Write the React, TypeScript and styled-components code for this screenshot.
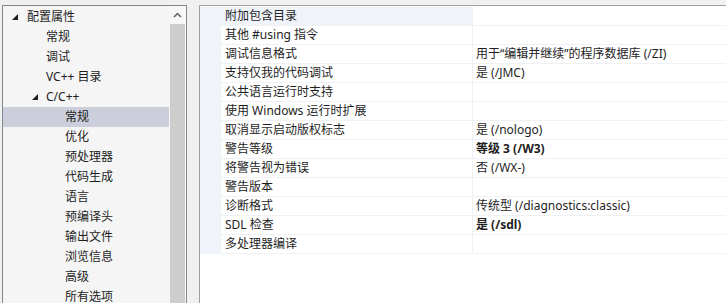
import React from "react";
import styled, { createGlobalStyle } from "styled-components";

const Global = createGlobalStyle`
  html, body { margin: 0; padding: 0; background: #f0f0f0; }
  body { font-family: "Noto Sans", "Noto Sans CJK SC", sans-serif; font-size: 12px; color: #1e1e1e; overflow: hidden; }
`;

const Page = styled.div`
  display: flex;
  align-items: flex-start;
  padding: 5px 0 0 2px;
  height: 303px;
  box-sizing: border-box;
  overflow: hidden;
`;

const TreePanel = styled.div`
  width: 185px;
  height: 320px;
  box-sizing: border-box;
  border: 1px solid #828790;
  background: #f5f5f5;
  display: flex;
  flex-shrink: 0;
`;

const TreeList = styled.div`
  flex: 1;
  padding-top: 1px;
  display: flex;
  flex-direction: column;
`;

const TreeRow = styled.div<{ $level: number; $selected?: boolean }>`
  height: 20px;
  display: flex;
  align-items: center;
  padding-left: ${(p) => 24 + p.$level * 19}px;
  background: ${(p) => (p.$selected ? "#cccedb" : "transparent")};
  position: relative;
  white-space: nowrap;
  line-height: 20px;
`;

const Expander = styled.svg`
  position: absolute;
  top: 7px;
`;

const ScrollBar = styled.div`
  width: 17px;
  background: #f7f7f7;
  display: flex;
  flex-direction: column;
  align-items: center;
`;

const ScrollArrow = styled.div`
  height: 18px;
  width: 100%;
  display: flex;
  align-items: center;
  justify-content: center;
`;

const Thumb = styled.div`
  width: 15px;
  flex: 1;
  background: #cdcdcd;
`;

const Gap = styled.div`
  width: 12px;
  flex-shrink: 0;
`;

const GridPanel = styled.div`
  flex: 1;
  height: 320px;
  border-left: 1px solid #a0a0a0;
  border-top: 1px solid #a0a0a0;
  background: #ffffff;
  padding-top: 1px;
  box-sizing: border-box;
`;

const Row = styled.div`
  display: grid;
  grid-template-columns: 21px 252px 1fr;
  height: 19px;
`;

const Margin = styled.div`
  background: #f0f4fa;
`;

const Cell = styled.div<{ $active?: boolean; $bold?: boolean }>`
  border-bottom: 1px solid #f0f1f5;
  background: ${(p) => (p.$active ? "#f0f4fa" : "#ffffff")};
  font-weight: ${(p) => (p.$bold ? 700 : 400)};
  padding-left: 4px;
  line-height: 18px;
  white-space: nowrap;
  overflow: hidden;
`;

const NameCell = styled(Cell)`
  border-right: 1px solid #f0f1f5;
`;

const ValueCell = styled(Cell)`
  padding-left: 3px;
`;

type TreeItem = { label: string; level: number; expanded?: boolean; selected?: boolean };

const tree: TreeItem[] = [
  { label: "配置属性", level: 0, expanded: true },
  { label: "常规", level: 1 },
  { label: "调试", level: 1 },
  { label: "VC++ 目录", level: 1 },
  { label: "C/C++", level: 1, expanded: true },
  { label: "常规", level: 2, selected: true },
  { label: "优化", level: 2 },
  { label: "预处理器", level: 2 },
  { label: "代码生成", level: 2 },
  { label: "语言", level: 2 },
  { label: "预编译头", level: 2 },
  { label: "输出文件", level: 2 },
  { label: "浏览信息", level: 2 },
  { label: "高级", level: 2 },
  { label: "所有选项", level: 2 },
];

type Prop = { name: string; value?: string; bold?: boolean };

const props: Prop[] = [
  { name: "附加包含目录" },
  { name: "其他 #using 指令" },
  { name: "调试信息格式", value: "用于“编辑并继续”的程序数据库 (/ZI)" },
  { name: "支持仅我的代码调试", value: "是 (/JMC)" },
  { name: "公共语言运行时支持" },
  { name: "使用 Windows 运行时扩展" },
  { name: "取消显示启动版权标志", value: "是 (/nologo)" },
  { name: "警告等级", value: "等级 3 (/W3)", bold: true },
  { name: "将警告视为错误", value: "否 (/WX-)" },
  { name: "警告版本" },
  { name: "诊断格式", value: "传统型 (/diagnostics:classic)" },
  { name: "SDL 检查", value: "是 (/sdl)", bold: true },
  { name: "多处理器编译" },
];

export default function App() {
  return (
    <>
      <Global />
      <Page>
        <TreePanel>
          <TreeList>
            {tree.map((t, i) => (
              <TreeRow key={i} $level={t.level} $selected={t.selected}>
                {t.expanded && (
                  <Expander
                    width="6"
                    height="6"
                    viewBox="0 0 6 6"
                    style={{ left: 9 + t.level * 20 }}
                  >
                    <polygon points="0,6 6,6 6,0" fill="#1e1e1e" />
                  </Expander>
                )}
                {t.label}
              </TreeRow>
            ))}
          </TreeList>
          <ScrollBar>
            <ScrollArrow>
              <svg width="9" height="6" viewBox="0 0 9 6">
                <polyline points="1,5 4.5,1.5 8,5" fill="none" stroke="#606060" strokeWidth="1.5" />
              </svg>
            </ScrollArrow>
            <Thumb />
          </ScrollBar>
        </TreePanel>
        <Gap />
        <GridPanel>
          {props.map((p, i) => (
            <Row key={i}>
              <Margin />
              <NameCell $active={i === 0}>{p.name}</NameCell>
              <ValueCell $bold={p.bold}>{p.value ?? ""}</ValueCell>
            </Row>
          ))}
        </GridPanel>
      </Page>
    </>
  );
}
